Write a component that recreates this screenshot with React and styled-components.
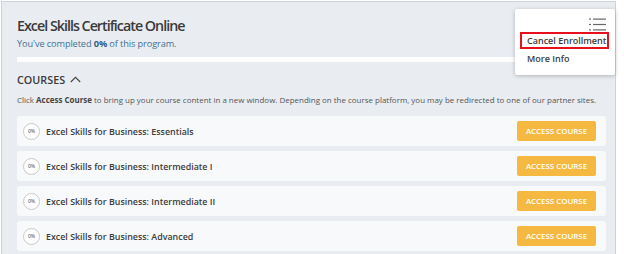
import React from "react";
import styled, { createGlobalStyle } from "styled-components";

const Global = createGlobalStyle`
  html, body { margin: 0; padding: 0; background: #ffffff; }
  body { font-family: "Open Sans", "Liberation Sans", sans-serif; }
  #root { width: 624px; height: 254px; overflow: hidden; }
`;

const Frame = styled.div`
  height: 254px;
  box-sizing: border-box;
  padding: 1px 8px 0 1px;
`;

const Panel = styled.section`
  position: relative;
  height: 100%;
  box-sizing: border-box;
  background: #e9edf2;
  border: 1px solid #cdd2d8;
  border-bottom: none;
  padding: 14px 9px 0 15px;
`;

const Title = styled.h1`
  margin: 0;
  font-size: 14.3px;
  line-height: 20px;
  font-weight: 600;
  letter-spacing: -1px;
  color: #3a3a3a;
`;

const Progress = styled.p`
  margin: 2px 0 0;
  font-size: 9.2px;
  line-height: 12px;
  letter-spacing: -0.1px;
  color: #3f6f94;
  b { font-weight: 700; color: #2d5f86; }
`;

const Bar = styled.div`
  height: 5px;
  background: #ffffff;
  margin-top: 7px;
`;

const SectionHead = styled.div`
  display: flex;
  align-items: center;
  gap: 5px;
  margin-top: 11px;
  font-size: 10.8px;
  line-height: 14px;
  font-weight: 600;
  color: #3a3a3a;
  text-transform: uppercase;
  svg { display: block; margin-top: -2px; }
`;

const Note = styled.p`
  margin: 7px 0 0;
  font-size: 7.96px;
  line-height: 12px;
  color: #555;
  white-space: nowrap;
  b { font-weight: 700; color: #444; }
`;

const List = styled.div`
  display: flex;
  flex-direction: column;
  gap: 5px;
  margin-top: 10px;
`;

const Row = styled.div`
  display: flex;
  align-items: center;
  height: 30px;
  padding: 0 10px 0 6px;
  background: #f8f9fb;
  border-radius: 3px;
`;

const Badge = styled.span`
  width: 15px;
  height: 15px;
  border-radius: 50%;
  border: 1.5px solid #c9c9c9;
  background: #fff;
  display: flex;
  align-items: center;
  justify-content: center;
  font-size: 5px;
  line-height: 5px;
  font-weight: 600;
  color: #777;
  flex: none;
`;

const CourseName = styled.span`
  margin-left: 6px;
  flex: 1;
  font-size: 8.9px;
  font-weight: 600;
  color: #3c3c3c;
`;

const AccessButton = styled.button`
  width: 79px;
  height: 20px;
  border: none;
  border-radius: 2px;
  background: #f5b942;
  color: #fff;
  font-family: inherit;
  font-size: 7.9px;
  font-weight: 600;
  text-transform: uppercase;
  padding: 0;
`;

const Menu = styled.div`
  position: absolute;
  top: 7px;
  right: 0;
  width: 100px;
  height: 66px;
  box-sizing: border-box;
  background: #fff;
  border-radius: 2px;
  box-shadow: 0 1px 4px rgba(0, 0, 0, 0.25);
  padding: 9px 0 0 5px;
  display: flex;
  flex-direction: column;
`;

const MenuIcon = styled.div`
  display: flex;
  justify-content: flex-end;
  padding-right: 9px;
  height: 14px;
  svg { display: block; }
`;

const MenuItem = styled.div`
  font-size: 9px;
  line-height: 11px;
  font-weight: 600;
  color: #3c3c3c;
  padding: 1px 5px;
  width: 89px;
  box-sizing: border-box;
  border: 2px solid ${(p) => (p.$highlight ? "#e8101c" : "transparent")};
  margin-top: ${(p) => (p.$highlight ? "0" : "1px")};
  white-space: nowrap;
`;

const courses = [
  "Excel Skills for Business: Essentials",
  "Excel Skills for Business: Intermediate I",
  "Excel Skills for Business: Intermediate II",
  "Excel Skills for Business: Advanced",
];

export default function App() {
  return (
    <>
      <Global />
      <Frame>
        <Panel>
          <Title>Excel Skills Certificate Online</Title>
          <Progress>
            You've completed <b>0%</b> of this program.
          </Progress>
          <Bar />
          <SectionHead>
            Courses
            <svg width="11" height="7" viewBox="0 0 11 7">
              <path d="M0.8 6 L5.5 1.3 L10.2 6" fill="none" stroke="#444" strokeWidth="1.1" />
            </svg>
          </SectionHead>
          <Note>
            Click <b>Access Course</b> to bring up your course content in a new window. Depending on the course platform, you may be redirected to one of our partner sites.
          </Note>
          <List>
            {courses.map((c) => (
              <Row key={c}>
                <Badge>0%</Badge>
                <CourseName>{c}</CourseName>
                <AccessButton>Access Course</AccessButton>
              </Row>
            ))}
          </List>
          <Menu>
            <MenuIcon>
              <svg width="17" height="13" viewBox="0 0 17 13">
                <g fill="#666">
                  <rect x="0" y="0.5" width="2" height="1.2" />
                  <rect x="0" y="5.9" width="2" height="1.2" />
                  <rect x="0" y="11.3" width="2" height="1.2" />
                  <rect x="4" y="0.5" width="13" height="1.2" />
                  <rect x="4" y="5.9" width="13" height="1.2" />
                  <rect x="4" y="11.3" width="13" height="1.2" />
                </g>
              </svg>
            </MenuIcon>
            <MenuItem $highlight>Cancel Enrollment</MenuItem>
            <MenuItem>More Info</MenuItem>
          </Menu>
        </Panel>
      </Frame>
    </>
  );
}
